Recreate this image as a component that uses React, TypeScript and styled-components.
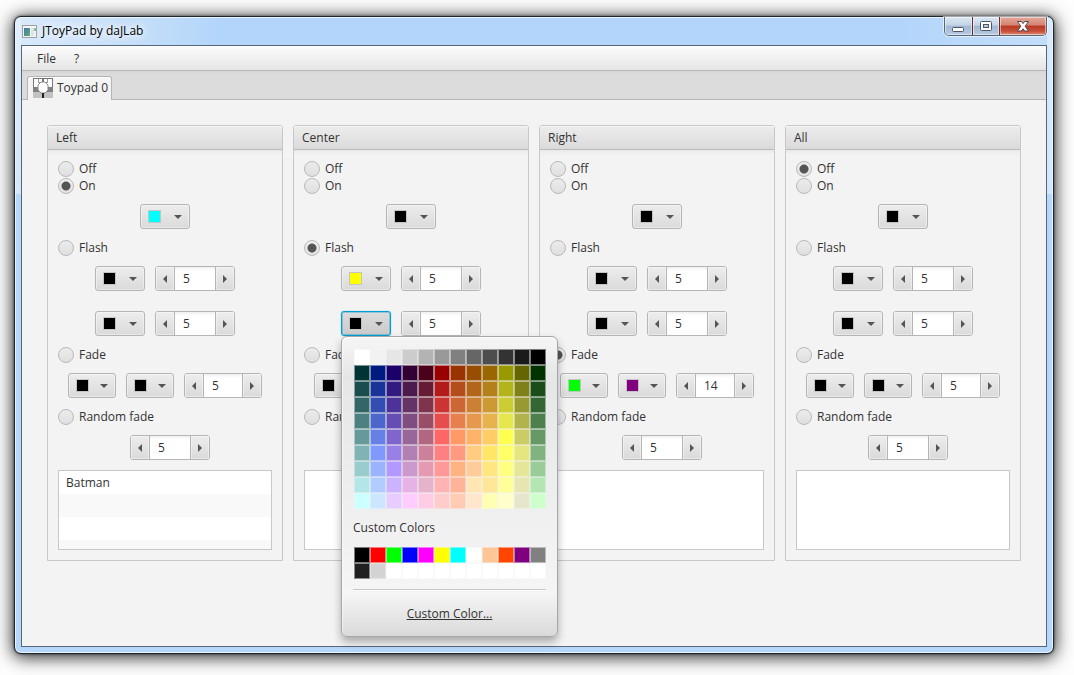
import React, { useState } from "react";
import styled, { createGlobalStyle, css } from "styled-components";

const GlobalStyle = createGlobalStyle`
  *, *::before, *::after { box-sizing: border-box; }
  body {
    margin: 0;
    background: #fdfdfd;
    color: #323232;
    font: 12px/16px "Open Sans", "Noto Sans", sans-serif;
    overflow: hidden;
  }
  button, input { font: inherit; color: inherit; margin: 0; padding: 0; }
`;

/* ---------- window frame ---------- */

const Desktop = styled.div`
  display: flex;
  min-height: 100vh;
  padding: 16px 20px 21px 14px;
`;

const Window = styled.div`
  flex: 1;
  min-width: 0;
  display: flex;
  flex-direction: column;
  padding: 0 6px 6px;
  border: 1px solid #1f262e;
  border-radius: 7px;
  background:
    linear-gradient(#e2effc, #d3e6fb) left top / 6px 177px no-repeat,
    linear-gradient(#d8e9fb, #d3e6fb) right top / 6px 177px no-repeat,
    linear-gradient(to right, #d9eafb, #c4def9 12%, #b3d5fb 20%, #b3d5fb 85%, #c4defa) top / 100% 28px no-repeat,
    #b6d6fa;
  box-shadow:
    inset 0 0 0 1px #eaf4fe,
    0 0 3px rgba(0, 0, 0, 0.6),
    0 2px 17px 1px rgba(0, 0, 0, 0.85);
`;

const TitleBar = styled.header`
  display: flex;
  align-items: flex-start;
  height: 28px;
`;

const Title = styled.h1`
  display: flex;
  align-items: center;
  gap: 5px;
  flex: 1;
  height: 28px;
  margin: 0;
  padding-left: 1px;
  font-size: 12px;
  font-weight: 400;
  color: #000;
  text-shadow: 0 0 8px #fff, 0 0 8px #fff, 0 0 12px #fff;
`;

const WindowControls = styled.div`
  display: flex;
  height: 19px;
  border: 1px solid #55657a;
  border-top: 0;
  border-radius: 0 0 5px 5px;
  overflow: hidden;
  box-shadow: 0 0 0 1px rgba(255, 255, 255, 0.6);
`;

const WindowButton = styled.button<{ $close?: boolean }>`
  display: flex;
  align-items: center;
  justify-content: center;
  width: ${(p) => (p.$close ? 47 : 27)}px;
  border: 0;
  box-shadow: inset 0 0 0 1px rgba(255, 255, 255, 0.5);
  background: ${(p) =>
    p.$close
      ? "linear-gradient(#e3a99c, #d48372 45%, #b93a24 50%, #c8503a 80%, #e0907c)"
      : "linear-gradient(#dbe7f3, #c5d5e7 45%, #a3b9d3 50%, #b5cae2)"};
  & + & { border-left: 1px solid ${(p) => (p.$close ? "#6b2a2a" : "#6d7f96")}; }
`;

const Client = styled.div`
  flex: 1;
  display: flex;
  flex-direction: column;
  border: 1px solid #56677b;
  background: #f3f3f3;
`;

const MenuBar = styled.nav`
  display: flex;
  height: 25px;
  padding: 0 7px;
  border-bottom: 1px solid #b8b8b8;
  background: linear-gradient(#fcfcfc, #e5e5e5);
`;

const MenuButton = styled.button`
  border: 0;
  padding: 2px 9px 0 8px;
  background: none;
  & + & { padding-left: 9px; }
`;

const TabStrip = styled.div`
  display: flex;
  align-items: flex-end;
  height: 29px;
  padding-left: 5px;
  border-bottom: 1px solid #b5b5b5;
  background: linear-gradient(#d6d6d6, #dcdcdc 4px);
`;

const Tab = styled.button`
  display: flex;
  align-items: center;
  gap: 4px;
  height: 24px;
  margin-bottom: -1px;
  padding: 0 3px 1px 5px;
  border: 1px solid #b5b5b5;
  border-bottom: 0;
  border-radius: 3px 3px 0 0;
  background: linear-gradient(#fdfdfd, #f3f3f3 4px);
`;

const Content = styled.main`
  flex: 1;
  display: flex;
  align-items: flex-start;
  gap: 10px;
  padding: 25px;
`;

/* ---------- pad panel ---------- */

const Panel = styled.section`
  flex: 1;
  min-width: 0;
  border: 1px solid #c8c8c8;
  border-radius: 3px 3px 0 0;
`;

const PanelTitle = styled.h2`
  height: 24px;
  margin: 0;
  padding: 0 8px;
  border-bottom: 1px solid #bababa;
  border-radius: 2px 2px 0 0;
  background: linear-gradient(#ededed, #dadada);
  box-shadow: inset 0 1px 0 #f6f6f6;
  font-size: 12px;
  line-height: 24px;
  font-weight: 400;
`;

const PanelBody = styled.div`
  display: flex;
  flex-direction: column;
  gap: 10px;
  padding: 10px;
  background: linear-gradient(#e9e9e9, #f3f3f3 5px);
`;

const RadioLabel = styled.label`
  display: flex;
  align-items: center;
  gap: 5px;
  height: 17px;
  padding-top: 1px;
`;

const Radio = styled.input.attrs({ type: "radio" })`
  appearance: none;
  width: 16px;
  height: 16px;
  border: 1px solid #b9b9b9;
  border-radius: 50%;
  background: linear-gradient(#ececec, #dfdfdf);
  &:checked {
    background: radial-gradient(circle, #555 0 4px, transparent 5px), linear-gradient(#f0f0f0, #e2e2e2);
  }
`;

const Row = styled.div<{ $spaced?: boolean; $indent?: boolean }>`
  display: flex;
  justify-content: center;
  gap: 10px;
  margin-bottom: ${(p) => (p.$spaced ? 10 : 0)}px;
  padding-left: ${(p) => (p.$indent ? 10 : 0)}px;
`;

const PickerAnchor = styled.div`
  position: relative;
`;

const PickerButton = styled.button<{ $narrow?: boolean; $open?: boolean }>`
  display: flex;
  align-items: center;
  justify-content: space-between;
  width: ${(p) => (p.$narrow ? 48 : 50)}px;
  height: 25px;
  padding: 0 7px;
  border: 1px solid #b5b5b5;
  border-radius: 3px;
  background: linear-gradient(#ededed, #dadada);
  box-shadow: inset 0 0 0 1px rgba(255, 255, 255, 0.4);
  ${(p) =>
    p.$open &&
    css`
      border-color: #039ed3;
      background: linear-gradient(#dcdcdc, #cacaca);
      box-shadow: inset 0 0 0 1px rgba(3, 158, 211, 0.35), 0 0 1px #039ed3;
    `}
`;

const Swatch = styled.span<{ $color: string }>`
  width: 13px;
  height: 13px;
  border: 1px solid #c4c4c4;
  background: ${(p) => p.$color};
`;

const SpinnerBox = styled.div<{ $narrow?: boolean }>`
  display: flex;
  width: ${(p) => (p.$narrow ? 78 : 80)}px;
  height: 25px;
  border: 1px solid #b5b5b5;
  border-radius: 3px;
  background: #fff;
  overflow: hidden;
`;

const SpinnerButton = styled.button`
  display: flex;
  align-items: center;
  justify-content: center;
  flex: 0 0 19px;
  border: 0 solid #b5b5b5;
  background: linear-gradient(#ededed, #dadada);
  box-shadow: inset 0 0 0 1px rgba(255, 255, 255, 0.4);
  &:first-child { border-right-width: 1px; }
  &:last-child { border-left-width: 1px; }
`;

const SpinnerInput = styled.input`
  flex: 1;
  width: 0;
  min-width: 0;
  padding: 0 8px;
  border: 0;
  outline: 0;
  background: linear-gradient(#f0f0f0, #fff 4px);
`;

const List = styled.ul<{ $filled: boolean }>`
  height: 80px;
  margin: 0;
  padding: 0;
  border: 1px solid #c8c8c8;
  list-style: none;
  background: ${(p) =>
    p.$filled ? "repeating-linear-gradient(#fff 0 23px, #f9f9f9 23px 46px)" : "#fff"};
`;

const ListItem = styled.li`
  height: 23px;
  padding: 0 7px;
  line-height: 23px;
`;

/* ---------- colour popup ---------- */

const Popup = styled.div`
  position: absolute;
  z-index: 1;
  top: 100%;
  left: 0;
  width: 217px;
  height: 301px;
  padding: 12px 11px 0;
  border: 1px solid #a6a6a6;
  border-radius: 6px;
  background: linear-gradient(#f6f6f6, #e6e6e6 13%, #f5f5f5 86%, #d9d9d9);
  box-shadow:
    inset 1px 1px 0 rgba(255, 255, 255, 0.6),
    0 5px 9px rgba(0, 0, 0, 0.3);
`;

const ColorGrid = styled.div`
  display: grid;
  grid-template-columns: repeat(12, 16px);
  grid-auto-rows: 16px;
  margin-left: 1px;
`;

const ColorCell = styled.button<{ $color: string }>`
  border: 1px solid rgba(244, 244, 244, 0.5);
  background: ${(p) => p.$color};
`;

const PopupHeading = styled.p`
  margin: 11px 0;
`;

const Separator = styled.hr`
  margin: 10px 0 0;
  border: 0;
  border-top: 1px solid #c8c8c8;
  border-bottom: 1px solid #fcfcfc;
`;

const PopupLink = styled.a`
  display: block;
  margin-top: 15px;
  color: inherit;
  text-align: center;
  text-decoration: underline;
`;

/* ---------- drawings ---------- */

const AppIcon = () => (
  <svg width="15" height="13" viewBox="0 0 15 13" aria-hidden="true">
    <defs>
      <linearGradient id="screen" x1="0" y1="0" x2="1" y2="1">
        <stop offset="0" stopColor="#3e78a8" />
        <stop offset="1" stopColor="#5fae78" />
      </linearGradient>
    </defs>
    <rect x=".5" y=".5" width="14" height="12" fill="#f4f4f4" stroke="#9aa0a6" />
    <rect x="2" y="3" width="6" height="8" fill="url(#screen)" />
    <rect x="9" y="3" width="3" height="8" fill="#e2e2e2" />
    <rect x="12" y="3" width="2" height="3" fill="#7fbf9a" />
  </svg>
);

const ToypadIcon = () => (
  <svg width="20" height="20" viewBox="0 0 20 20" aria-hidden="true">
    <rect width="20" height="20" fill="#fff" />
    <path d="M0 0H20V10H19V1H1V10H0Z" fill="#777" />
    <path d="M9 0h2v5H9z" fill="#777" />
    <path d="M5 1h1v3h3v1H5zM14 1h1v4h-4V4h3z" fill="#999" />
    <rect y="9" width="20" height="5" fill="#808080" />
    <rect y="14" width="20" height="6" fill="#c2c2c2" />
    <path d="M8 4h4l3 3v5l-3 3H8l-3-3V7Z" fill="#fff" stroke="#8a8a8a" strokeWidth="1" />
    <rect x="9" y="15" width="2" height="5" fill="#222" />
  </svg>
);

const DownArrow = () => (
  <svg width="8" height="4" viewBox="0 0 8 4" aria-hidden="true">
    <path d="M0 0H8L4 4Z" fill="#555" />
  </svg>
);

const SideArrow = ({ right }: { right?: boolean }) => (
  <svg width="4" height="8" viewBox="0 0 4 8" aria-hidden="true">
    <path d={right ? "M0 0V8L4 4Z" : "M4 0V8L0 4Z"} fill="#555" />
  </svg>
);

const MinimizeIcon = () => (
  <svg width="13" height="11" viewBox="0 0 13 11" aria-hidden="true">
    <rect x=".5" y="6.5" width="11" height="4" rx="1" fill="#fff" stroke="#4c5566" />
  </svg>
);

const MaximizeIcon = () => (
  <svg width="12" height="11" viewBox="0 0 12 11" aria-hidden="true">
    <rect x=".5" y=".5" width="11" height="9" rx="1" fill="#fff" stroke="#4c5566" />
    <rect x="3.5" y="3.5" width="5" height="3" fill="#b9cadd" stroke="#4c5566" />
  </svg>
);

const CloseIcon = () => (
  <svg width="12" height="11" viewBox="0 0 12 11" aria-hidden="true">
    <path
      d="M.5.5H4.300L6 2.600 7.700.5H11.500L8.200 5.200 11.500 10H7.700L6 7.800 4.300 10H.5L3.800 5.200Z"
      fill="#fff"
      stroke="#4e4650"
    />
  </svg>
);

/* ---------- data ---------- */

const PALETTE = `
ffffff f2f2f2 e6e6e6 cccccc b3b3b3 999999 808080 666666 4d4d4d 333333 1a1a1a 000000
003333 001a80 1a0068 330033 4d001a 990000 993300 994d00 996600 999900 666600 003300
1a4d4d 1a3399 331a80 4d1a4d 661a33 b31a1a b34d1a b3661a b3801a b3b31a 80801a 1a4d1a
336666 334db3 4d3399 663366 80334d cc3333 cc6633 cc8033 cc9933 cccc33 999933 336633
4d8080 4d66cc 664db3 804d80 994d66 e64d4d e6804d e6994d e6b34d e6e64d b3b34d 4d804d
669999 6680e6 8066cc 996699 b36680 ff6666 ff9966 ffb366 ffcc66 ffff4d cccc66 669966
80b3b3 8099ff 9980e6 b380b3 cc8099 ff8080 ff9980 ffcc80 ffe666 ffff66 e6e680 80b380
99cccc 99b3ff b399ff cc99cc e699b3 ff9999 ffb380 ffcc99 ffe680 ffff80 e6e699 99cc99
b3e6e6 b3ccff ccb3ff e6b3e6 e6b3cc ffb3b3 ffb399 ffe6b3 ffe699 ffff99 e6e6b3 b3e6b3
ccffff cce6ff e6ccff ffccff ffcce6 ffcccc ffccb3 ffe6cc ffffb3 ffffcc e6e6cc ccffcc
`.trim().split(/\s+/).map((c) => `#${c}`);

const CUSTOM = [
  "#000000", "#ff0000", "#00ff00", "#0000ff", "#ff00ff", "#ffff00",
  "#00ffff", "#ffffff", "#ffc594", "#ff4500", "#800080", "#808080",
  "#202020", "#d3d3d3", ...Array<string>(10).fill("#ffffff"),
];

type Mode = "Off" | "On" | "Flash" | "Fade" | "Random fade";

interface Pad {
  name: string;
  mode: Mode;
  on: string;
  flash: [string, string];
  fade: [string, string];
  fadeTime: number;
  tags: string[];
  openPicker?: boolean;
}

const BLACK = "#000000";

const PADS: Pad[] = [
  { name: "Left", mode: "On", on: "#00ffff", flash: [BLACK, BLACK], fade: [BLACK, BLACK], fadeTime: 5, tags: ["Batman"] },
  { name: "Center", mode: "Flash", on: BLACK, flash: ["#ffff00", BLACK], fade: [BLACK, BLACK], fadeTime: 5, tags: [], openPicker: true },
  { name: "Right", mode: "Fade", on: BLACK, flash: [BLACK, BLACK], fade: ["#00ff00", "#800080"], fadeTime: 14, tags: [] },
  { name: "All", mode: "Off", on: BLACK, flash: [BLACK, BLACK], fade: [BLACK, BLACK], fadeTime: 5, tags: [] },
];

/* ---------- controls ---------- */

function ColorPicker({ initial, label, narrow, startOpen = false }: {
  initial: string;
  label: string;
  narrow?: boolean;
  startOpen?: boolean;
}) {
  const [color, setColor] = useState(initial);
  const [open, setOpen] = useState(startOpen);
  const choose = (c: string) => {
    setColor(c);
    setOpen(false);
  };
  const cells = (colors: string[]) => (
    <ColorGrid>
      {colors.map((c, i) => (
        <ColorCell key={i} type="button" $color={c} aria-label={c} onClick={() => choose(c)} />
      ))}
    </ColorGrid>
  );
  return (
    <PickerAnchor>
      <PickerButton type="button" $narrow={narrow} $open={open} aria-label={label} aria-expanded={open} onClick={() => setOpen(!open)}>
        <Swatch $color={color} />
        <DownArrow />
      </PickerButton>
      {open && (
        <Popup>
          {cells(PALETTE)}
          <PopupHeading>Custom Colors</PopupHeading>
          {cells(CUSTOM)}
          <Separator />
          <PopupLink href="#custom">Custom Color...</PopupLink>
        </Popup>
      )}
    </PickerAnchor>
  );
}

function Spinner({ initial, label, narrow }: { initial: number; label: string; narrow?: boolean }) {
  const [value, setValue] = useState(initial);
  return (
    <SpinnerBox $narrow={narrow}>
      <SpinnerButton type="button" aria-label="Decrease" onClick={() => setValue(value - 1)}>
        <SideArrow />
      </SpinnerButton>
      <SpinnerInput aria-label={label} value={value} onChange={(e) => setValue(Number(e.target.value) || 0)} />
      <SpinnerButton type="button" aria-label="Increase" onClick={() => setValue(value + 1)}>
        <SideArrow right />
      </SpinnerButton>
    </SpinnerBox>
  );
}

function PadPanel({ pad }: { pad: Pad }) {
  const [mode, setMode] = useState<Mode>(pad.mode);
  const radio = (m: Mode) => (
    <RadioLabel>
      <Radio name={pad.name} checked={mode === m} onChange={() => setMode(m)} />
      {m}
    </RadioLabel>
  );
  return (
    <Panel>
      <PanelTitle>{pad.name}</PanelTitle>
      <PanelBody>
        <div>
          {radio("Off")}
          {radio("On")}
        </div>
        <Row>
          <ColorPicker initial={pad.on} label="On color" />
        </Row>
        {radio("Flash")}
        <Row $spaced>
          <ColorPicker initial={pad.flash[0]} label="Flash on color" />
          <Spinner initial={5} label="Flash on time" />
        </Row>
        <Row>
          <ColorPicker initial={pad.flash[1]} label="Flash off color" startOpen={pad.openPicker} />
          <Spinner initial={5} label="Flash off time" />
        </Row>
        {radio("Fade")}
        <Row>
          <ColorPicker initial={pad.fade[0]} label="Fade from color" narrow />
          <ColorPicker initial={pad.fade[1]} label="Fade to color" narrow />
          <Spinner initial={pad.fadeTime} label="Fade time" narrow />
        </Row>
        {radio("Random fade")}
        <Row $indent>
          <Spinner initial={5} label="Random fade time" />
        </Row>
        <List $filled={pad.tags.length > 0}>
          {pad.tags.map((t) => (
            <ListItem key={t}>{t}</ListItem>
          ))}
        </List>
      </PanelBody>
    </Panel>
  );
}

export default function App() {
  return (
    <>
      <GlobalStyle />
      <Desktop>
        <Window>
          <TitleBar>
            <Title>
              <AppIcon />
              JToyPad by daJLab
            </Title>
            <WindowControls>
              <WindowButton type="button" aria-label="Minimize"><MinimizeIcon /></WindowButton>
              <WindowButton type="button" aria-label="Maximize"><MaximizeIcon /></WindowButton>
              <WindowButton type="button" aria-label="Close" $close><CloseIcon /></WindowButton>
            </WindowControls>
          </TitleBar>
          <Client>
            <MenuBar>
              <MenuButton type="button">File</MenuButton>
              <MenuButton type="button">?</MenuButton>
            </MenuBar>
            <TabStrip role="tablist">
              <Tab type="button" role="tab" aria-selected>
                <ToypadIcon />
                Toypad 0
              </Tab>
            </TabStrip>
            <Content>
              {PADS.map((pad) => (
                <PadPanel key={pad.name} pad={pad} />
              ))}
            </Content>
          </Client>
        </Window>
      </Desktop>
    </>
  );
}
